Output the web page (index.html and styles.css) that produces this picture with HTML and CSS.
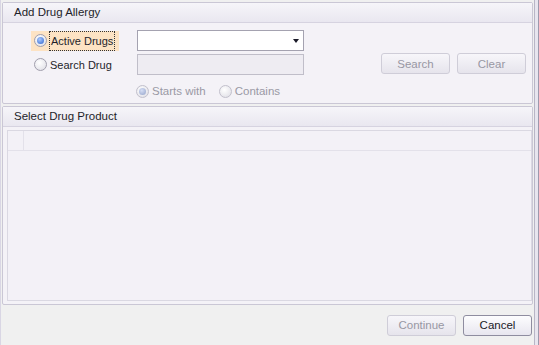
FILE: index.html
```html
<html>

<head>
	<link rel="stylesheet" href="styles.css">
</head>

<body>
	<div class="window">
		<div class="main">
			<div class="group top">
				<div class="group-head">Add Drug Allergy</div>
				<div class="group-body">
					<div class="row">
						<label class="opt focused">
							<span class="radio checked"></span>
							<span class="focus-text">Active Drugs</span>
						</label>
						<div class="combo">
							<span class="arrow"></span>
						</div>
					</div>
					<div class="row">
						<label class="opt">
							<span class="radio"></span>
							<span>Search Drug</span>
						</label>
						<div class="textbox"></div>
						<div class="buttons">
							<button type="button" class="btn" disabled>Search</button>
							<button type="button" class="btn" disabled>Clear</button>
						</div>
					</div>
					<div class="row modes">
						<label class="opt disabled">
							<span class="radio checked"></span>
							<span>Starts with</span>
						</label>
						<label class="opt disabled">
							<span class="radio"></span>
							<span>Contains</span>
						</label>
					</div>
				</div>
			</div>

			<div class="group product">
				<div class="group-head">Select Drug Product</div>
				<div class="grid">
					<div class="grid-row">
						<div class="row-head"></div>
						<div class="cell"></div>
					</div>
				</div>
			</div>

			<div class="footer">
				<button type="button" class="btn wide" disabled>Continue</button>
				<button type="button" class="btn wide active">Cancel</button>
			</div>
		</div>
		<div class="edge"></div>
	</div>
</body>

</html>
```

FILE: styles.css
```css
* {
	box-sizing: border-box;
}

body {
	margin: 0;
	font-family: "Liberation Sans", Tahoma, sans-serif;
	font-size: 11px;
	color: #1e1e2a;
	background-color: #f0f0f0;
	overflow: hidden;
}

.window {
	display: flex;
	width: 539px;
	height: 345px;
}

.main {
	flex: 1;
	display: flex;
	flex-direction: column;
	padding: 2px 1px 0 1px;
	border-left: 1px solid #d9d6e4;
}

.edge {
	width: 5px;
	border-left: 1px solid #b8b5c6;
	border-right: 1px solid #9c99ad;
	background-color: #e7e5ee;
}

.group {
	border: 1px solid #cac7d5;
	border-radius: 2px;
	background-color: #f4f2f7;
}

.group-head {
	height: 20px;
	line-height: 19px;
	padding-left: 11px;
	font-size: 11.5px;
	background: linear-gradient(#f6f5f9, #e9e7f0);
	border-bottom: 1px solid #d6d3e0;
}

.group-body {
	display: flex;
	flex-direction: column;
	padding: 7px 0 0 28px;
	height: 80px;
}

.row {
	display: flex;
	align-items: center;
	height: 21px;
	margin-bottom: 3px;
}

.opt {
	display: flex;
	align-items: center;
	gap: 3px;
	width: 106px;
	height: 20px;
	padding-left: 3px;
	white-space: nowrap;
}

.focused {
	width: 88px;
	background-color: #fde3c4;
	margin-right: 18px;
}

.focus-text {
	outline: 1px dotted #333;
	outline-offset: 0;
	padding: 3px 1px;
}

.radio {
	width: 13px;
	height: 13px;
	border-radius: 50%;
	border: 1px solid #a19fad;
	background: radial-gradient(circle at 40% 35%, #ffffff, #dcdbe3);
	display: flex;
	align-items: center;
	justify-content: center;
	flex: none;
}

.radio.checked::after {
	content: "";
	width: 7px;
	height: 7px;
	border-radius: 50%;
	background: radial-gradient(circle at 40% 35%, #a8c8ff, #2f63cc);
}

.combo {
	position: relative;
	width: 167px;
	height: 21px;
	border: 1px solid #a4a2b0;
	background-color: #ffffff;
}

.arrow {
	position: absolute;
	right: 4px;
	top: 8px;
	border-left: 3px solid transparent;
	border-right: 3px solid transparent;
	border-top: 4px solid #1a1a28;
}

.textbox {
	width: 167px;
	height: 21px;
	border: 1px solid #c0bec9;
	background-color: #eeecf2;
}

.buttons {
	display: flex;
	gap: 7px;
	margin-left: 77px;
	margin-top: -2px;
}

.btn {
	font-family: "Liberation Sans", Tahoma, sans-serif;
	font-size: 11.5px;
	width: 69px;
	height: 21px;
	padding: 0;
	color: #9897a3;
	background: linear-gradient(#f7f6fa, #e6e4ec);
	border: 1px solid #cfcdd8;
	border-radius: 3px;
}

.modes {
	padding-left: 102px;
	margin-top: 3px;
}

.modes .opt {
	width: auto;
	margin-right: 10px;
	color: #9a99a5;
	font-size: 11.5px;
}

.disabled .radio {
	border-color: #c2c0cc;
}

.disabled .radio.checked::after {
	background: radial-gradient(circle at 40% 35%, #d6def5, #94a3c9);
}

.product {
	flex: 1;
	margin-top: 2px;
	display: flex;
	flex-direction: column;
}

.grid {
	flex: 1;
	margin: 3px 0 3px 4px;
	border: 1px solid #dad8e2;
	background-color: #f3f1f7;
}

.grid-row {
	display: flex;
	height: 20px;
	border-bottom: 1px solid #e3e1ea;
}

.row-head {
	width: 16px;
	border-right: 1px solid #e3e1ea;
}

.footer {
	display: flex;
	justify-content: flex-end;
	gap: 7px;
	height: 40px;
	align-items: center;
	padding-right: 1px;
}

.btn.wide {
	width: 69px;
	height: 21px;
}

.btn.active {
	color: #1a1a26;
	border-color: #8f8da0;
	background: linear-gradient(#fdfdfe, #e8e6ef);
}
```
